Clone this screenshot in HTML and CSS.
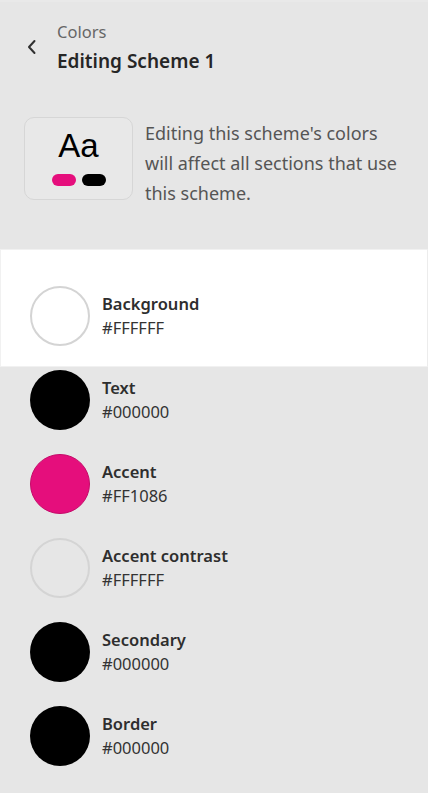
FILE: index.html
```html
<!DOCTYPE html>
<html lang="en">
<head>
<meta charset="utf-8">
<title>Editing Scheme 1</title>
<link rel="stylesheet" href="styles.css">
</head>
<body>
<div class="panel">
  <header class="header">
    <button class="back" aria-label="Back">
      <svg width="12" height="16" viewBox="0 0 12 16"><path d="M8.5 2 L3 8 L8.5 14" fill="none" stroke="#303030" stroke-width="2" stroke-linecap="round" stroke-linejoin="round"/></svg>
    </button>
    <div class="titles">
      <div class="crumb">Colors</div>
      <h1 class="title">Editing Scheme 1</h1>
    </div>
  </header>

  <section class="intro">
    <div class="preview">
      <div class="aa">Aa</div>
      <div class="pills">
        <span class="pill pill-accent"></span>
        <span class="pill pill-text"></span>
      </div>
    </div>
    <p class="desc">Editing this scheme's colors will affect all sections that use this scheme.</p>
  </section>

  <div class="swatch swatch-active">
    <span class="dot dot-light" style="background:#FFFFFF"></span>
    <div class="info"><div class="name">Background</div><div class="hex">#FFFFFF</div></div>
  </div>
  <ul class="swatches">
    <li class="swatch">
      <span class="dot" style="background:#000000"></span>
      <div class="info"><div class="name">Text</div><div class="hex">#000000</div></div>
    </li>
    <li class="swatch">
      <span class="dot dot-accent" style="background:#E50E7C"></span>
      <div class="info"><div class="name">Accent</div><div class="hex">#FF1086</div></div>
    </li>
    <li class="swatch">
      <span class="dot dot-light" style="background:#E6E6E6"></span>
      <div class="info"><div class="name">Accent contrast</div><div class="hex">#FFFFFF</div></div>
    </li>
    <li class="swatch">
      <span class="dot" style="background:#000000"></span>
      <div class="info"><div class="name">Secondary</div><div class="hex">#000000</div></div>
    </li>
    <li class="swatch">
      <span class="dot" style="background:#000000"></span>
      <div class="info"><div class="name">Border</div><div class="hex">#000000</div></div>
    </li>
  </ul>
</div>
</body>
</html>
```

FILE: styles.css
```css
* { box-sizing: border-box; }
html, body { margin: 0; padding: 0; }
body {
  background: #e6e6e6;
  font-family: "Noto Sans", "Open Sans", sans-serif;
  color: #303030;
  width: 428px;
  height: 793px;
  overflow: hidden;
}
.panel {
  border-top: 2px solid #e9e9e9;
}
.header {
  display: flex;
  align-items: flex-start;
  padding: 18px 0 0 25px;
}
.back {
  background: none;
  border: 0;
  padding: 0;
  margin: 19px 19px 0 1px;
  width: 12px;
  height: 16px;
  display: flex;
}
.crumb {
  font-size: 16.5px;
  line-height: 24px;
  color: #666;
}
.title {
  margin: 4px 0 0;
  font-size: 19px;
  line-height: 26px;
  font-weight: 600;
  color: #262626;
}
.intro {
  display: flex;
  align-items: flex-start;
  padding: 43px 20px 0 24px;
  gap: 12px;
  height: 175px;
}
.preview {
  flex: 0 0 109px;
  height: 83px;
  border: 1px solid #d6d6d6;
  border-radius: 10px;
  background: #e8e8e8;
  display: flex;
  flex-direction: column;
  align-items: center;
  padding-top: 10px;
}
.aa {
  font-family: "Liberation Sans", Arial, sans-serif;
  font-size: 33px;
  line-height: 36px;
  color: #000;
}
.pills {
  display: flex;
  gap: 6px;
  margin-top: 10px;
}
.pill {
  width: 24px;
  height: 12px;
  border-radius: 6px;
}
.pill-accent { background: #e50e7c; }
.pill-text { background: #000; }
.desc {
  margin: 0;
  padding-top: 1px;
  font-size: 18px;
  line-height: 30px;
  color: #555;
}
.swatches {
  list-style: none;
  margin: 0;
  padding: 3px 0 0;
  display: flex;
  flex-direction: column;
  gap: 24px;
}
.swatch {
  display: flex;
  align-items: center;
  gap: 12px;
  padding: 0 30px;
}
.swatch-active {
  background: #fff;
  border: 1px solid #f1f1f1;
  border-right-color: #ececec;
  padding: 36px 29px 20px;
  height: 118px;
}
.dot {
  width: 60px;
  height: 60px;
  border-radius: 50%;
  flex: 0 0 60px;
}
.dot-light { border: 2px solid #d4d4d4; }
.dot-accent { border: 1px solid #c40b69; }
.name {
  font-size: 16.5px;
  line-height: 24px;
  font-weight: 600;
  color: #2e2e2e;
}
.hex {
  font-size: 16.5px;
  line-height: 24px;
  color: #333;
}
```
